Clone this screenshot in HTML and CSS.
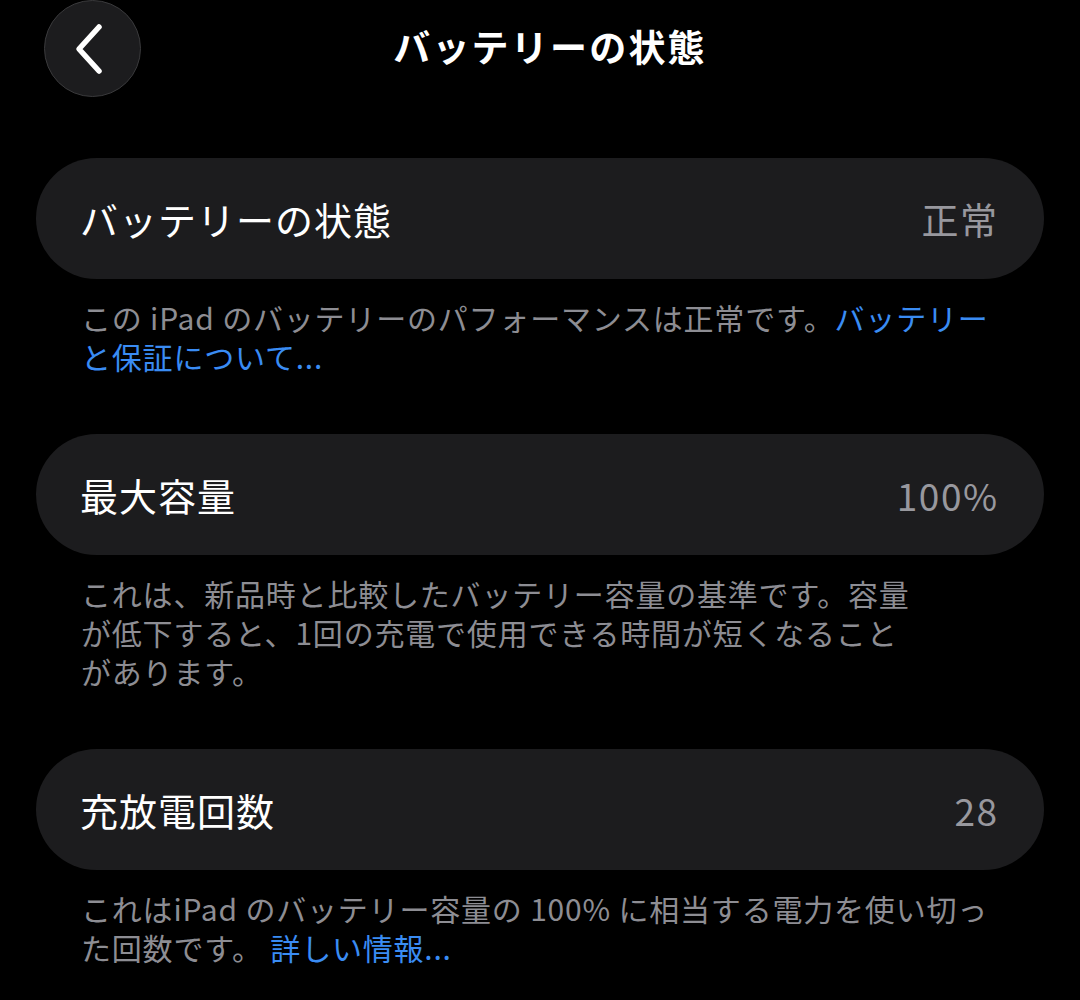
FILE: index.html
```html
<!DOCTYPE html>
<html lang="ja">
<head>
<meta charset="utf-8">
<title>バッテリーの状態</title>
<link rel="stylesheet" href="styles.css">
</head>
<body>
<header class="nav">
  <button class="back" aria-label="戻る">
    <svg width="40" height="52" viewBox="0 0 40 52"><path d="M29 4 L9 26 L29 48" fill="none" stroke="#fff" stroke-width="5.5" stroke-linecap="round" stroke-linejoin="round"/></svg>
  </button>
  <h1 class="title">バッテリーの状態</h1>
  <span class="spacer"></span>
</header>
<main class="content">
  <section class="group">
    <div class="row"><span class="label">バッテリーの状態</span><span class="value">正常</span></div>
    <p class="note">この iPad のバッテリーのパフォーマンスは正常です。<a class="link">バッテリー<br>と保証について...</a></p>
  </section>
  <section class="group">
    <div class="row"><span class="label">最大容量</span><span class="value">100%</span></div>
    <p class="note">これは、新品時と比較したバッテリー容量の基準です。容量<br>が低下すると、1回の充電で使用できる時間が短くなること<br>があります。</p>
  </section>
  <section class="group">
    <div class="row"><span class="label">充放電回数</span><span class="value">28</span></div>
    <p class="note">これはiPad のバッテリー容量の 100% に相当する電力を使い切っ<br>た回数です。 <a class="link">詳しい情報...</a></p>
  </section>
</main>
</body>
</html>
```
FILE: styles.css
```css
* { box-sizing: border-box; }
html, body { margin: 0; padding: 0; }
body {
  background: #000;
  color: #fff;
  font-family: "Noto Sans CJK JP", "Inter", sans-serif;
  width: 1080px;
  height: 1000px;
  overflow: hidden;
}
.nav {
  display: grid;
  grid-template-columns: 1fr auto 1fr;
  align-items: center;
  padding: 0 24px 0 44px;
  height: 97px;
}
.back {
  justify-self: start;
  width: 97px;
  height: 97px;
  border-radius: 50%;
  background: #1c1c1e;
  border: 1.5px solid #3a3a3c;
  display: flex;
  align-items: center;
  justify-content: center;
  padding: 0 6px 0 0;
  margin: 0;
}
.title {
  margin: 0 0 4px;
  font-size: 37px;
  font-weight: 700;
  line-height: 1;
  letter-spacing: 2.2px;
}
.content {
  padding: 61px 36px 0;
  display: flex;
  flex-direction: column;
  gap: 58px;
}
.row {
  height: 121px;
  border-radius: 61px;
  background: #1c1c1e;
  display: flex;
  align-items: center;
  justify-content: space-between;
  padding: 0 47px 0 44px;
}
.label {
  font-size: 38px;
  letter-spacing: 1px;
}
.value {
  font-size: 37px;
  letter-spacing: 1.5px;
  margin-right: -1.5px;
  color: #98989e;
}
.note {
  margin: 19px 0 0;
  padding: 0 45px;
  font-size: 30px;
  line-height: 39px;
  letter-spacing: 0.8px;
  color: #8d8d93;
}
.link { color: #3a8cf3; }
```
